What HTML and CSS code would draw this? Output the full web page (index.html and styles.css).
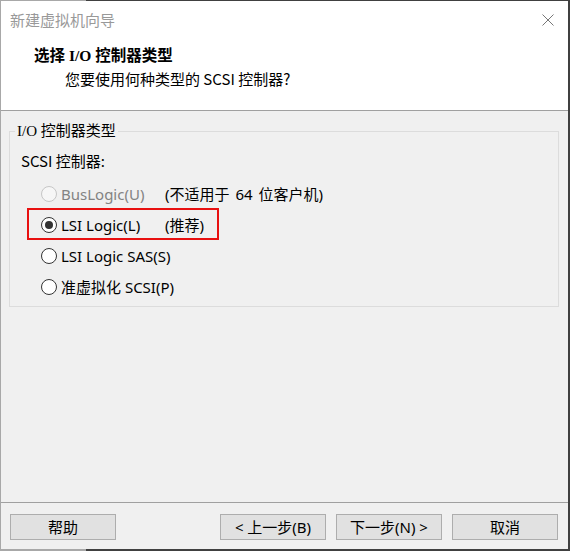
FILE: index.html
```html
<!DOCTYPE html>
<html lang="zh-CN">
<head>
  <meta charset="UTF-8">
  <meta name="viewport" content="width=device-width, initial-scale=1.0">
  <link rel="stylesheet" href="styles.css">
  <title>新建虚拟机向导</title>
</head>
<body>
  <div class="frame">
    <div class="window">
      <div class="top">
        <div class="titlebar">
          <span class="title">新建虚拟机向导</span>
          <svg class="close" width="12" height="12" viewBox="0 0 12 12">
            <path d="M0.5 0.5 L11.5 11.5 M11.5 0.5 L0.5 11.5" stroke="#777" stroke-width="1" fill="none"/>
          </svg>
        </div>
        <div class="header">
          <div class="heading">选择 I/O 控制器类型</div>
          <div class="subheading">您要使用何种类型的 SCSI 控制器?</div>
        </div>
      </div>

      <div class="content">
        <fieldset class="group">
          <legend>I/O 控制器类型</legend>
          <div class="group-label">SCSI 控制器:</div>

          <div class="option disabled">
            <span class="radio"></span>
            <span class="option-text">BusLogic(U)</span>
            <span class="note">(不适用于 64 位客户机)</span>
          </div>
          <div class="option highlight">
            <span class="radio checked"></span>
            <span class="option-text">LSI Logic(L)</span>
            <span class="note">(推荐)</span>
          </div>
          <div class="option">
            <span class="radio"></span>
            <span class="option-text">LSI Logic SAS(S)</span>
          </div>
          <div class="option">
            <span class="radio"></span>
            <span class="option-text">准虚拟化 SCSI(P)</span>
          </div>
        </fieldset>
      </div>

      <div class="footer">
        <button class="btn">帮助</button>
        <div class="nav">
          <button class="btn">&lt; 上一步(B)</button>
          <button class="btn">下一步(N) &gt;</button>
          <button class="btn">取消</button>
        </div>
      </div>
    </div>
  </div>
</body>
</html>
```

FILE: styles.css
```css
body {
  margin: 0;
  font-family: "Noto Sans", "Noto Sans CJK SC", sans-serif;
  font-size: 15px;
  color: #000;
}

.frame {
  width: 570px;
  height: 551px;
  box-sizing: border-box;
  padding: 1px 2px 2px 1px;
  background: linear-gradient(to right, #a8a8a8 86px, #404040 86px);
}

.window {
  height: 100%;
  display: flex;
  flex-direction: column;
  background-color: #f0f0f0;
}

/* white title + header area */
.top {
  height: 110px;
  box-sizing: border-box;
  background-color: #fff;
  border-bottom: 1px solid #a0a0a0;
}

.titlebar {
  height: 37px;
  display: flex;
  align-items: center;
  justify-content: space-between;
  padding: 0 14px 0 9px;
}

.title {
  color: #999;
  line-height: 20px;
}

.close {
  display: block;
}

.header {
  padding-left: 33px;
}

.heading {
  margin-top: 8px;
  font-family: "Liberation Serif", "Noto Sans CJK SC", serif;
  font-size: 15.5px;
  font-weight: bold;
  line-height: 20px;
}

.subheading {
  margin: 3px 0 0 31px;
  font-family: "Noto Sans CJK SC", sans-serif;
  line-height: 20px;
}

/* options group */
.content {
  flex: 1;
}

.group {
  margin: 13px 9px 0 8px;
  padding: 0 5px 4px 5px;
  border: 1px solid #dcdcdc;
  min-width: 0;
}

.group legend {
  padding: 0 2px;
  font-family: "Liberation Serif", "Noto Sans CJK SC", serif;
  font-size: 15px;
  line-height: 14px;
}

.group-label {
  margin: 13px 0 7px 6px;
  font-family: "Noto Sans CJK SC", sans-serif;
  font-size: 15px;
  line-height: 20px;
}

.option {
  height: 31px;
  display: flex;
  align-items: center;
  position: relative;
}

.option.highlight::after {
  content: "";
  position: absolute;
  left: 12px;
  top: -1px;
  width: 192px;
  height: 32px;
  box-sizing: border-box;
  border: 2px solid #e81010;
}

.radio {
  width: 16px;
  height: 16px;
  box-sizing: border-box;
  margin-left: 26px;
  border: 1px solid #333;
  border-radius: 50%;
  background-color: #fff;
  display: flex;
  align-items: center;
  justify-content: center;
}

.radio.checked::after {
  content: "";
  width: 8px;
  height: 8px;
  border-radius: 50%;
  background-color: #333;
}

.option-text {
  margin-left: 4px;
  min-width: 104px;
  line-height: 20px;
}

.note {
  line-height: 20px;
  word-spacing: 2px;
}

.option.disabled .radio {
  border-color: #c6c6c6;
  background-color: #f6f6f6;
}

.option.disabled .option-text {
  color: #838383;
}

/* bottom buttons */
.footer {
  height: 47px;
  box-sizing: border-box;
  border-top: 1px solid #a0a0a0;
  padding: 11px 10px 0 9px;
  display: flex;
  justify-content: space-between;
  align-items: flex-start;
}

.nav {
  display: flex;
  gap: 10px;
}

.btn {
  width: 106px;
  height: 26px;
  padding: 0;
  font-family: "Noto Sans", "Noto Sans CJK SC", sans-serif;
  font-size: 15px;
  line-height: 20px;
  color: #000;
  background-color: #e1e1e1;
  border: 1px solid #adadad;
}
```
